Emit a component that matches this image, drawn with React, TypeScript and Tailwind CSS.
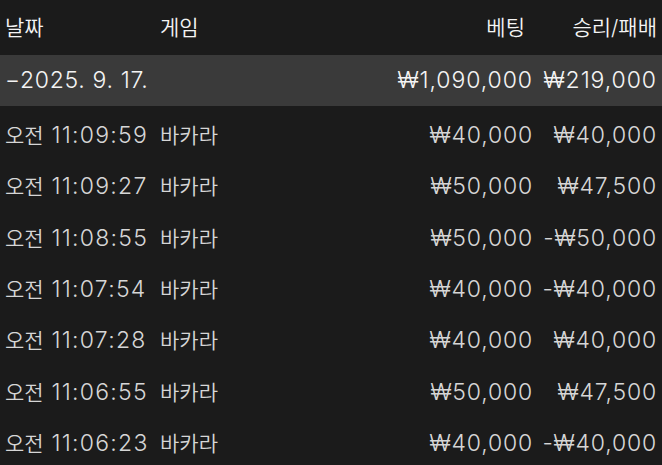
import React from 'react';

interface Row {
  time: string;
  game: string;
  bet: string;
  result: string;
}

const rows: Row[] = [
  { time: '11:09:59', game: '바카라', bet: '₩40,000', result: '₩40,000' },
  { time: '11:09:27', game: '바카라', bet: '₩50,000', result: '₩47,500' },
  { time: '11:08:55', game: '바카라', bet: '₩50,000', result: '-₩50,000' },
  { time: '11:07:54', game: '바카라', bet: '₩40,000', result: '-₩40,000' },
  { time: '11:07:28', game: '바카라', bet: '₩40,000', result: '₩40,000' },
  { time: '11:06:55', game: '바카라', bet: '₩50,000', result: '₩47,500' },
  { time: '11:06:23', game: '바카라', bet: '₩40,000', result: '-₩40,000' },
];

const font = { fontFamily: '"Inter", "Noto Sans CJK KR", sans-serif' };

export default function App() {
  return (
    <div
      className="w-[662px] h-[465px] overflow-hidden bg-[#1b1b1b] text-[23px] leading-none font-[350]"
      style={font}
    >
      <div className="flex items-center h-[55px] pl-[5px] pr-[5px] text-[21px] text-[#f4f4f4]">
        <div className="w-[155px]">날짜</div>
        <div className="flex-1">게임</div>
        <div className="text-right pr-[8px]">베팅</div>
        <div className="w-[124px] text-right">승리/패배</div>
      </div>

      <div className="flex items-center h-[51px] pl-[5px] pr-[5px] bg-[#3a3a3a] text-[#f4f4f4] tracking-[0.04em]">
        <div className="flex-1 tracking-[0.03em]">−2025. 9. 17.</div>
        <div className="text-right">₩1,090,000</div>
        <div className="w-[124px] text-right">₩219,000</div>
      </div>

      <div className="pt-[4px]">
        {rows.map((r, i) => (
          <div
            key={i}
            className="flex items-center h-[51.3px] pl-[5px] pr-[5px] text-[#d6d6d6] tracking-[0.035em]"
          >
            <div className="w-[155px] whitespace-nowrap tracking-[0.055em]">
              <span className="text-[21px] tracking-normal">오전</span> {r.time}
            </div>
            <div className="flex-1 text-[21px] tracking-normal">{r.game}</div>
            <div className="text-right">{r.bet}</div>
            <div className="w-[124px] text-right">{r.result}</div>
          </div>
        ))}
      </div>
    </div>
  );
}
